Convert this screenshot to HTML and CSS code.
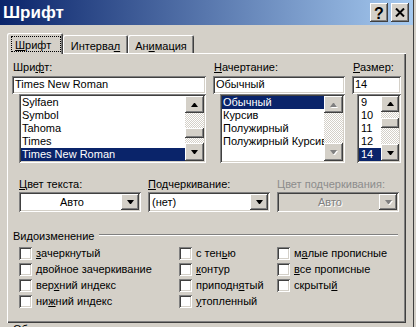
FILE: index.html
```html
<!DOCTYPE html>
<html lang="ru">
<head>
<meta charset="utf-8">
<title>Шрифт</title>
<link rel="stylesheet" href="styles.css">
</head>
<body>
<div class="dlg">
  <div class="titlebar">
    <span class="title">Шрифт</span>
    <div class="tbtns">
      <span class="tbtn help">?</span>
      <span class="tbtn close"><svg width="10" height="9" viewBox="0 0 10 9"><path d="M1 0.5 L9 8.5 M9 0.5 L1 8.5" stroke="#000" stroke-width="2" fill="none"/></svg></span>
    </div>
  </div>
  <div class="client">
    <div class="tabs">
      <div class="tab sel"><span class="focus"><u>Ш</u>рифт</span></div>
      <div class="tab t2">Интерва<u>л</u></div>
      <div class="tab t3">Ан<u>и</u>мация</div>
    </div>
    <div class="panel">
      <div class="top">
        <div class="col c-font">
          <div class="lbl">Шри<u>ф</u>т:</div>
          <div class="edit">Times New Roman</div>
          <div class="list l-font">
            <div class="items">
              <div class="it">Sylfaen</div>
              <div class="it">Symbol</div>
              <div class="it">Tahoma</div>
              <div class="it">Times</div>
              <div class="it sel">Times New Roman</div>
            </div>
            <div class="sb sb-font">
              <div class="sbtn up"><i class="tri t-up"></i></div>
              <div class="track"><div class="g1"></div><div class="thumb"></div></div>
              <div class="sbtn dn"><i class="tri t-dn"></i></div>
            </div>
          </div>
        </div>
        <div class="col c-style">
          <div class="lbl"><u>Н</u>ачертание:</div>
          <div class="edit">Обычный</div>
          <div class="list l-style">
            <div class="items">
              <div class="it sel">Обычный</div>
              <div class="it">Курсив</div>
              <div class="it">Полужирный</div>
              <div class="it">Полужирный Курсив</div>
            </div>
            <div class="sb sb-style">
              <div class="sbtn up"><i class="tri t-up dis"></i></div>
              <div class="track"></div>
              <div class="sbtn dn"><i class="tri t-dn dis"></i></div>
            </div>
          </div>
        </div>
        <div class="col c-size">
          <div class="lbl"><u>Р</u>азмер:</div>
          <div class="edit">14</div>
          <div class="list l-size">
            <div class="items">
              <div class="it">9</div>
              <div class="it">10</div>
              <div class="it">11</div>
              <div class="it">12</div>
              <div class="it sel">14</div>
            </div>
            <div class="sb sb-size">
              <div class="sbtn up"><i class="tri t-up"></i></div>
              <div class="track"><div class="g1"></div><div class="thumb"></div></div>
              <div class="sbtn dn"><i class="tri t-dn"></i></div>
            </div>
          </div>
        </div>
      </div>

      <div class="mid">
        <div class="mcol">
          <div class="lbl"><u>Ц</u>вет текста:</div>
          <div class="combo"><span class="val center">Авто</span><span class="dd"><i class="tri t-dn"></i></span></div>
        </div>
        <div class="mcol">
          <div class="lbl"><u>П</u>одчеркивание:</div>
          <div class="combo"><span class="val">(нет)</span><span class="dd"><i class="tri t-dn"></i></span></div>
        </div>
        <div class="mcol">
          <div class="lbl gray">Цвет подчеркивания:</div>
          <div class="combo dis"><span class="val center gray-emb">Авто</span><span class="dd"><i class="tri t-dn dis"></i></span></div>
        </div>
      </div>

      <div class="grp"><span>Видоизменение</span><span class="line"></span></div>

      <div class="checks">
        <label class="chk"><span class="cb"></span><span><u>з</u>ачеркнутый</span></label>
        <label class="chk"><span class="cb"></span><span><u>д</u>войное зачеркивание</span></label>
        <label class="chk"><span class="cb"></span><span>вер<u>х</u>ний индекс</span></label>
        <label class="chk"><span class="cb"></span><span>ни<u>ж</u>ний индекс</span></label>
        <label class="chk c2"><span class="cb"></span><span>с тен<u>ь</u>ю</span></label>
        <label class="chk c2"><span class="cb"></span><span><u>к</u>онтур</span></label>
        <label class="chk c2"><span class="cb"></span><span>приподн<u>я</u>тый</span></label>
        <label class="chk c2"><span class="cb"></span><span><u>у</u>топленный</span></label>
        <label class="chk c3"><span class="cb"></span><span>м<u>а</u>лые прописные</span></label>
        <label class="chk c3"><span class="cb"></span><span><u>в</u>се прописные</span></label>
        <label class="chk c3"><span class="cb"></span><span>скрыты<u>й</u></span></label>
      </div>
    </div>
    <div class="frag">Образец</div>
  </div>
</div>
</body>
</html>
```

FILE: styles.css
```css
* { box-sizing: border-box; }
html, body { margin: 0; padding: 0; }
body {
  width: 416px; height: 327px; overflow: hidden;
  background: #d4d0c8;
  font-family: "Liberation Sans", Arial, sans-serif;
  font-size: 11px; line-height: 13px; color: #000;
}
u { text-decoration: underline; text-underline-offset: 1px; }

.dlg { width: 414px; height: 327px; background: #d4d0c8; border-right: 1px solid #404040; }

.titlebar {
  height: 25px; display: flex; align-items: center; justify-content: space-between;
  padding: 0 4px 0 3px;
  background: linear-gradient(to right, #0a246a, #a6caf0);
}
.title { color: #fff; font-weight: bold; font-size: 17px; line-height: 20px; }
.tbtns { display: flex; gap: 3px; }
.tbtn {
  width: 18px; height: 19px; display: flex; align-items: center; justify-content: center;
  background: #d4d0c8;
  box-shadow: inset -1px -1px 0 #404040, inset 1px 1px 0 #fff, inset -2px -2px 0 #808080;
}
.help { font-weight: bold; font-size: 16px; line-height: 15px; padding-top: 1px; }

.client { padding: 8px 0 0 7px; }

.tabs { display: flex; height: 20px; align-items: flex-start; position: relative; z-index: 1; }
.tab {
  height: 18px; margin-top: 2px; padding-top: 5px; text-align: center;
  background: #d4d0c8;
  border-top-left-radius: 2px; border-top-right-radius: 2px;
  box-shadow: inset 1px 1px 0 #fff, inset -1px 0 0 #404040, inset -2px 0 0 #808080;
}
.tab.sel { width: 56px; height: 21px; margin-top: 0; padding: 3px 2px 0 4px; text-align: left; }
.focus { display: block; height: 16px; border: 1px dotted #000; padding: 2px 0 0 3px; }
.t2 { width: 65px; }
.t3 { width: 66px; }

.panel {
  width: 399px; height: 270px; padding: 8px 3px 0 5px;
  box-shadow: inset 1px 1px 0 #fff, inset -1px -1px 0 #404040, inset -2px -2px 0 #808080;
}

.edit, .list, .combo, .cb {
  box-shadow: inset 1px 1px 0 #808080, inset -1px -1px 0 #fff, inset 2px 2px 0 #404040, inset -2px -2px 0 #d4d0c8;
}
.sbtn, .thumb, .dd {
  background: #d4d0c8;
  box-shadow: inset -1px -1px 0 #404040, inset 1px 1px 0 #fff, inset -2px -2px 0 #808080;
}

.top { display: flex; }
.c-font { width: 194px; }
.c-style { width: 132px; margin-left: 7px; }
.c-size { width: 49px; margin-left: 7px; }
.lbl { height: 13px; margin-bottom: 2px; padding-left: 1px; white-space: nowrap; }
.edit { height: 18px; background: #fff; padding: 2px 3px; white-space: nowrap; overflow: hidden; }

.list { height: 69px; background: #fff; display: flex; padding: 2px; }
.l-font { width: 187px; margin-left: 7px; }
.l-style { width: 125px; margin-left: 7px; }
.l-size { width: 44px; margin-left: 5px; }
.items { flex: 1; overflow: hidden; min-width: 0; }
.it { height: 13px; padding-left: 1px; white-space: nowrap; overflow: hidden; }
.it.sel { background: #0a246a; color: #fff; }
.l-size .it { padding-left: 2px; }

.sb { display: flex; flex-direction: column; flex: none; }
.sb-font { width: 19px; }
.sb-style { width: 19px; }
.sb-size { width: 18px; }
.sbtn { display: flex; align-items: center; justify-content: center; flex: none; }
.track {
  flex: 1; display: flex; flex-direction: column;
  background-color: #fff;
  background-image: conic-gradient(#d4d0c8 25%, #fff 0 50%, #d4d0c8 0 75%, #fff 0);
  background-size: 2px 2px;
}
.thumb { flex: none; }
.sb-font .up { height: 17px; }
.sb-font .dn { height: 18px; }
.sb-font .g1 { height: 15px; }
.sb-font .thumb { height: 10px; }
.sb-style .up { height: 17px; }
.sb-style .dn { height: 18px; }
.sb-size .up { height: 16px; }
.sb-size .dn { height: 17px; }
.sb-size .g1 { height: 6px; }
.sb-size .thumb { height: 10px; }

.tri { display: block; width: 1px; height: 0; border-left: 3px solid transparent; border-right: 3px solid transparent; box-sizing: content-box; }
.t-up { border-bottom: 4px solid #000; }
.t-dn { border-top: 4px solid #000; }
.t-up.dis { border-bottom-color: #808080; filter: drop-shadow(1px 1px 0 #fff); }
.t-dn.dis { border-top-color: #808080; filter: drop-shadow(1px 1px 0 #fff); }

.mid { display: flex; gap: 7px; margin-top: 15px; padding-left: 7px; }
.mcol { width: 122px; }
.mid .lbl { margin-bottom: 1px; padding-left: 0; }
.combo { height: 20px; background: #fff; display: flex; padding: 2px; }
.combo .val { flex: 1; padding-left: 2px; line-height: 16px; white-space: nowrap; }
.combo .val.center { text-align: center; }
.combo .dd { width: 18px; display: flex; align-items: center; justify-content: center; }
.combo.dis { background: #d4d0c8; }
.gray { color: #8c8c8c; }
.gray-emb { color: #808080; text-shadow: 1px 1px 0 #fff; }

.grp { display: flex; align-items: flex-start; margin-top: 18px; padding-left: 1px; }
.grp .line { flex: 1; height: 2px; border-top: 1px solid #808080; border-bottom: 1px solid #fff; margin: 4px 5px 0 5px; }

.checks {
  display: grid; grid-template-columns: 160px 98px 1fr; grid-template-rows: repeat(4, 13px);
  grid-auto-flow: column; row-gap: 3px; margin-top: 4px; padding-left: 7px;
}
.chk { display: flex; align-items: flex-start; white-space: nowrap; }
.cb { width: 13px; height: 13px; background: #fff; margin-right: 4px; flex: none; }

.frag { padding-left: 6px; }
```
